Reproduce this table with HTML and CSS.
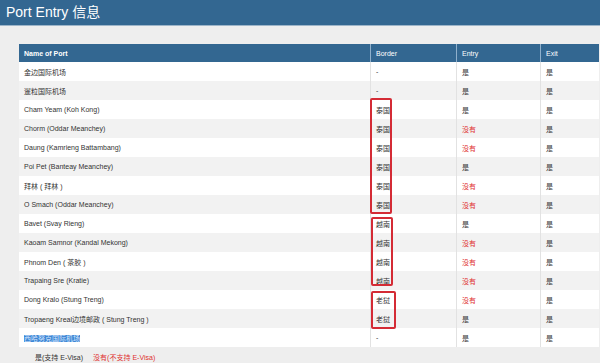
FILE: index.html
```html
<!DOCTYPE html>
<html lang="zh">
<head>
<meta charset="utf-8">
<title>Port Entry 信息</title>
<link rel="stylesheet" href="styles.css">
</head>
<body>
<div class="topbar">Port Entry 信息</div>
<div class="content">
  <div class="table-wrap">
    <table class="ports">
      <thead>
        <tr><th class="c-name">Name of Port</th><th class="c-border">Border</th><th class="c-entry">Entry</th><th class="c-exit">Exit</th></tr>
      </thead>
      <tbody>
        <tr><td>金边国际机场</td><td>-</td><td>是</td><td>是</td></tr>
        <tr><td>暹粒国际机场</td><td>-</td><td>是</td><td>是</td></tr>
        <tr><td>Cham Yeam (Koh Kong)</td><td>泰国</td><td>是</td><td>是</td></tr>
        <tr><td>Chorm (Oddar Meanchey)</td><td>泰国</td><td class="no">没有</td><td>是</td></tr>
        <tr><td>Daung (Kamrieng Battambang)</td><td>泰国</td><td class="no">没有</td><td>是</td></tr>
        <tr><td>Poi Pet (Banteay Meanchey)</td><td>泰国</td><td>是</td><td>是</td></tr>
        <tr><td>拜林 ( 拜林 )</td><td>泰国</td><td class="no">没有</td><td>是</td></tr>
        <tr><td>O Smach (Oddar Meanchey)</td><td>泰国</td><td class="no">没有</td><td>是</td></tr>
        <tr><td>Bavet (Svay Rieng)</td><td>越南</td><td>是</td><td>是</td></tr>
        <tr><td>Kaoam Samnor (Kandal Mekong)</td><td>越南</td><td class="no">没有</td><td>是</td></tr>
        <tr><td>Phnom Den ( 茶胶 )</td><td>越南</td><td class="no">没有</td><td>是</td></tr>
        <tr><td>Trapaing Sre (Kratie)</td><td>越南</td><td class="no">没有</td><td>是</td></tr>
        <tr><td>Dong Kralo (Stung Treng)</td><td>老挝</td><td class="no">没有</td><td>是</td></tr>
        <tr><td>Tropaeng Kreal边境邮政 ( Stung Treng )</td><td>老挝</td><td>是</td><td>是</td></tr>
        <tr><td><span class="sel">西哈努克国际机场</span></td><td>-</td><td>是</td><td>是</td></tr>
      </tbody>
    </table>
    <div class="mark mark-th"></div>
    <div class="mark mark-vn"></div>
    <div class="mark mark-la"></div>
  </div>
  <div class="legend"><span>是(支持 E-Visa)</span><span class="no">没有(不支持 E-Visa)</span></div>
</div>
</body>
</html>
```
FILE: styles.css
```css
html, body {
  margin: 0;
  padding: 0;
}
body {
  background: #eeeeee;
  font-family: "Liberation Sans", "Noto Sans CJK SC", sans-serif;
  color: #333333;
  font-size: 7px;
  width: 600px;
  height: 363px;
  overflow: hidden;
}
.topbar {
  height: 25px;
  line-height: 25px;
  background: #336791;
  color: #ffffff;
  font-size: 14px;
  padding-left: 6px;
  border-bottom: 1px solid #9db5c9;
}
.content {
  padding: 18px 4px 0 19px;
}
.table-wrap {
  position: relative;
  width: 577px;
}
.ports {
  width: 577px;
  border-collapse: collapse;
  table-layout: fixed;
}
.ports th {
  height: 18px;
  background: #336791;
  color: #ffffff;
  font-weight: bold;
  text-align: left;
  padding: 0 5px;
  border-left: 1px solid #8fb0cc;
}
.ports th:first-child { border-left: none; }
.ports th.c-border, .ports th.c-entry, .ports th.c-exit { font-weight: normal; }
.c-name { width: 341px; }
.c-border { width: 75px; }
.c-entry { width: 73px; }
.c-exit { width: 48px; }
.ports td {
  height: 19px;
  padding: 0 5px;
  border-left: 1px solid #e2e2e2;
  white-space: nowrap;
}
.ports td:first-child { border-left: none; }
.ports tbody tr:nth-child(odd) { background: #ffffff; }
.ports tbody tr:nth-child(even) { background: #f2f2f2; }
.no { color: #e0302f; }
.sel {
  background: #3f86d4;
  color: #d6e7ff;
}
.mark {
  position: absolute;
  border: 2px solid #d42b35;
  border-radius: 2px;
  box-sizing: border-box;
}
.mark-th { left: 351px; top: 54px; width: 22px; height: 116px; }
.mark-vn { left: 352px; top: 173px; width: 22px; height: 69px; }
.mark-la { left: 352px; top: 247px; width: 25px; height: 38px; }
.legend {
  padding: 4px 0 0 16px;
  display: flex;
  gap: 10px;
  height: 14px;
  line-height: 14px;
}
```
